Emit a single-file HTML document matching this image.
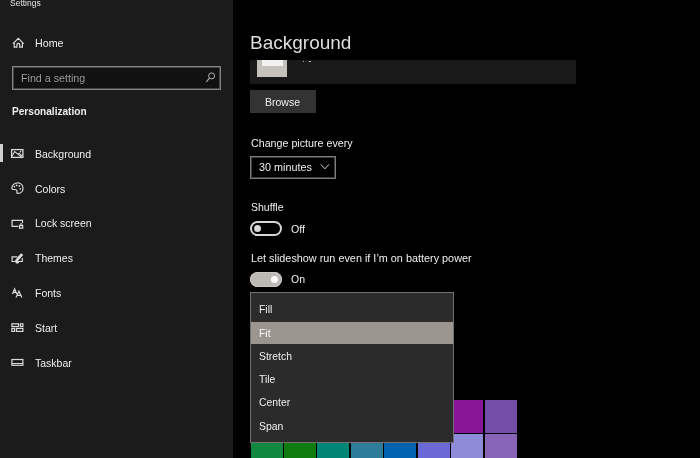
<!DOCTYPE html>
<html><head><meta charset="utf-8">
<style>
*{margin:0;padding:0;box-sizing:border-box}
html,body{width:700px;height:458px;overflow:hidden;background:#000}
body{position:relative;-webkit-font-smoothing:antialiased;font-family:"Liberation Sans",sans-serif;color:#efefef}
.a{position:absolute;white-space:nowrap;line-height:1;will-change:transform}
#side{position:absolute;left:0;top:0;width:233px;height:458px;background:#1b1b1b}
.ic{position:absolute}
</style></head><body>
<div id="side">
  <div class="a" style="left:10.4px;top:-1.5px;font-size:8.5px;color:#e4e4e4">Settings</div>
  <svg class="ic" style="left:8px;top:33px" width="20" height="20" viewBox="0 0 20 20">
    <path d="M5 10.6 L10.3 5.3 L15.6 10.6 M6.2 9.5 V14.2 H8.9 V11.8 A1.4 1.4 0 0 1 11.7 11.8 V14.2 H14.4 V9.5" fill="none" stroke="#dcdcdc" stroke-width="1.2"/>
  </svg>
  <div class="a" style="left:35.3px;top:38.1px;font-size:10.7px">Home</div>
  <div style="position:absolute;left:12px;top:66px;width:209px;height:24px;border:1px solid #838383;box-shadow:inset 0 0 0 1px #454545;background:#111"></div>
  <div class="a" style="left:20.6px;top:72.8px;font-size:10.7px;color:#9a9a9a">Find a setting</div>
  <svg class="ic" style="left:198px;top:64px" width="28" height="28" viewBox="0 0 28 28">
    <circle cx="13.6" cy="11.9" r="3" fill="none" stroke="#b0b0b0" stroke-width="1"/>
    <path d="M11.5 14.2 L8.3 17.8" stroke="#b0b0b0" stroke-width="1.1"/>
  </svg>
  <div class="a" style="left:12px;top:106.8px;font-size:10.1px;font-weight:bold;color:#ececec">Personalization</div>

  <div style="position:absolute;left:0;top:144px;width:3px;height:18px;background:#cfcfcf"></div>
  <!-- Background icon -->
  <svg class="ic" style="left:8px;top:144px" width="20" height="20" viewBox="0 0 20 20">
    <rect x="3.6" y="5.6" width="11.3" height="7.8" fill="none" stroke="#dadada" stroke-width="1.3"/>
    <path d="M4.2 12 L6.6 7.6 L13.6 13 M10 10.2 L11.2 9.2 L14.2 11.8" fill="none" stroke="#dadada" stroke-width="1.1"/>
    <circle cx="12.6" cy="7.6" r="0.8" fill="#dadada"/>
  </svg>
  <div class="a" style="left:35px;top:148.90px;font-size:10.5px">Background</div>
  <!-- Colors icon -->
  <svg class="ic" style="left:8px;top:179px" width="20" height="20" viewBox="0 0 20 20">
    <path d="M9 14.2 C9.5 14.3 9.7 14.4 10.2 14.4 C13 14.4 15 12.2 15 9.2 C15 6.2 12.8 3.9 9.8 3.9 C6.6 3.9 3.9 6.2 3.9 9 C3.9 10.3 4.6 10.6 5.6 10.5 C7.2 10.4 8.5 10.4 8.8 11.5 C9 12.5 8.8 13.2 9 14.2 Z" fill="none" stroke="#dadada" stroke-width="1.2"/>
    <circle cx="6.5" cy="7.6" r="0.85" fill="#dadada"/><circle cx="8.7" cy="6.4" r="0.85" fill="#dadada"/><circle cx="11.4" cy="6.9" r="0.85" fill="#dadada"/><circle cx="12.2" cy="9.8" r="0.85" fill="#dadada"/>
  </svg>
  <div class="a" style="left:35px;top:183.68px;font-size:10.5px">Colors</div>
  <!-- Lock screen icon -->
  <svg class="ic" style="left:8px;top:214px" width="20" height="20" viewBox="0 0 20 20">
    <path d="M10.2 12.4 H4.1 V6.3 H14.5 V9" fill="none" stroke="#dadada" stroke-width="1.2"/>
    <rect x="11.5" y="11.6" width="3.2" height="2.6" fill="none" stroke="#dadada" stroke-width="1.2"/>
    <path d="M12.2 11.2 V9.8 H14 V11.2" fill="none" stroke="#dadada" stroke-width="0.9"/>
  </svg>
  <div class="a" style="left:35px;top:218.46px;font-size:10.5px">Lock screen</div>
  <!-- Themes icon -->
  <svg class="ic" style="left:8px;top:249px" width="20" height="20" viewBox="0 0 20 20">
    <path d="M9.5 7.8 H4.1 V12.5 H14.3 V9" fill="none" stroke="#dadada" stroke-width="1.2"/>
    <path d="M7.4 13 H11 L10.4 14.6 H8 Z" fill="#dadada"/>
    <path d="M6.9 11.5 L13 4.2 L15.3 6.1 L9.2 12.8 Z" fill="#dadada"/>
  </svg>
  <div class="a" style="left:35px;top:253.24px;font-size:10.5px">Themes</div>
  <!-- Fonts icon -->
  <svg class="ic" style="left:8px;top:284px" width="20" height="20" viewBox="0 0 20 20">
    <path d="M4.5 10 L6.6 4.9 L8.7 10 M5.3 8.3 H7.9" fill="none" stroke="#dadada" stroke-width="1.25"/>
    <path d="M8 13.4 L10.9 7.2 L13.9 13.4 M9 11.3 H12.8" fill="none" stroke="#dadada" stroke-width="1.2"/>
  </svg>
  <div class="a" style="left:35px;top:288.02px;font-size:10.5px">Fonts</div>
  <!-- Start icon -->
  <svg class="ic" style="left:8px;top:318px" width="20" height="20" viewBox="0 0 20 20">
    <rect x="3.9" y="5.8" width="6.6" height="2.7" fill="none" stroke="#dadada" stroke-width="1.2"/>
    <rect x="12.4" y="5.8" width="2.5" height="2.7" fill="none" stroke="#dadada" stroke-width="1.2"/>
    <rect x="3.9" y="10.4" width="2.7" height="3" fill="none" stroke="#dadada" stroke-width="1.2"/>
    <rect x="8.5" y="10.4" width="6.4" height="3" fill="none" stroke="#dadada" stroke-width="1.2"/>
  </svg>
  <div class="a" style="left:35px;top:322.80px;font-size:10.5px">Start</div>
  <!-- Taskbar icon -->
  <svg class="ic" style="left:8px;top:353px" width="20" height="20" viewBox="0 0 20 20">
    <rect x="3.9" y="6.5" width="11" height="5.8" fill="none" stroke="#dadada" stroke-width="1.2"/>
    <path d="M3.9 10.5 H14.9" stroke="#dadada" stroke-width="1"/>
  </svg>
  <div class="a" style="left:35px;top:357.58px;font-size:10.5px">Taskbar</div>
</div>

<div id="content">
  <!-- picture bar -->
  <div style="position:absolute;left:250px;top:60px;width:326px;height:24px;background:#1a1a1a"></div>
  <div style="position:absolute;left:257px;top:60px;width:30px;height:17px;background:#c5c2be"></div>
  <div style="position:absolute;left:262px;top:60px;width:20.5px;height:6px;background:#f2f2f2"></div>
  <div style="position:absolute;left:302.5px;top:60.5px;width:1.5px;height:1.5px;background:#bbb"></div>
  <div style="position:absolute;left:309px;top:60.5px;width:1.5px;height:1.5px;background:#bbb"></div>
  <!-- header -->
  <div style="position:absolute;left:233px;top:0;width:467px;height:60px;background:#000"></div>
  <div class="a" style="left:249.8px;top:33.3px;font-size:19px;color:#dedede">Background</div>

  <div style="position:absolute;left:250px;top:90px;width:66px;height:23px;background:#333"></div>
  <div class="a" style="left:265px;top:96.8px;font-size:10.5px">Browse</div>

  <div class="a" style="left:250.6px;top:138px;font-size:10.7px">Change picture every</div>
  <div style="position:absolute;left:250px;top:156px;width:86px;height:23px;border:1px solid #7c7c7c;box-shadow:inset 0 0 0 1px #3c3c3c"></div>
  <div class="a" style="left:259px;top:161.8px;font-size:10.8px">30 minutes</div>
  <svg class="ic" style="left:320px;top:163px" width="11" height="8" viewBox="0 0 11 8">
    <path d="M0.7 1.3 L4.9 5.8 L9.1 1.3" fill="none" stroke="#cfcfcf" stroke-width="1"/>
  </svg>

  <div class="a" style="left:250.9px;top:201.8px;font-size:10.5px">Shuffle</div>
  <div style="position:absolute;left:250px;top:221px;width:32px;height:14.6px;border:2px solid #d6d6d6;border-radius:8px"></div>
  <div style="position:absolute;left:253.8px;top:224.5px;width:7.2px;height:7.2px;border-radius:50%;background:#d6d6d6"></div>
  <div class="a" style="left:291px;top:223.6px;font-size:10.7px">Off</div>

  <div class="a" style="left:250.8px;top:253.3px;font-size:10.85px">Let slideshow run even if I’m on battery power</div>
  <div style="position:absolute;left:250px;top:272px;width:32px;height:14.5px;border-radius:8px;background:#bcb8b4;box-shadow:inset 0 0 0 1px #c8c6c4"></div>
  <div style="position:absolute;left:271.2px;top:275.6px;width:7.2px;height:7.2px;border-radius:50%;background:#fff"></div>
  <div class="a" style="left:291px;top:274.3px;font-size:10.5px">On</div>

  <!-- color tiles -->
  <div style="position:absolute;left:451px;top:400px;width:32.4px;height:33px;background:#881798"></div>
  <div style="position:absolute;left:484.5px;top:400px;width:32.4px;height:33px;background:#744da9"></div>
  <div style="position:absolute;left:250.5px;top:434.3px;width:32px;height:33px;background:#10893e"></div>
  <div style="position:absolute;left:284px;top:434.3px;width:32px;height:33px;background:#107c10"></div>
  <div style="position:absolute;left:317.4px;top:434.3px;width:32px;height:33px;background:#018574"></div>
  <div style="position:absolute;left:350.8px;top:434.3px;width:32px;height:33px;background:#2d7d9a"></div>
  <div style="position:absolute;left:384.2px;top:434.3px;width:32px;height:33px;background:#0063b1"></div>
  <div style="position:absolute;left:417.6px;top:434.3px;width:32px;height:33px;background:#6b69d6"></div>
  <div style="position:absolute;left:451px;top:434.3px;width:32px;height:33px;background:#8e8cd8"></div>
  <div style="position:absolute;left:484.5px;top:434.3px;width:32px;height:33px;background:#8764b8"></div>

  <!-- popup -->
  <div style="position:absolute;left:250px;top:292px;width:204px;height:151px;background:#2b2b2b;border:1px solid #727272"></div>
  <div style="position:absolute;left:251px;top:322px;width:202px;height:22px;background:#9b958f"></div>
  <div class="a" style="left:258.9px;top:305.3px;font-size:10.4px">Fill</div>
  <div class="a" style="left:258.9px;top:328.6px;font-size:10.4px;color:#fafafa">Fit</div>
  <div class="a" style="left:259.3px;top:351.8px;font-size:10.4px">Stretch</div>
  <div class="a" style="left:259.3px;top:375.1px;font-size:10.4px">Tile</div>
  <div class="a" style="left:259px;top:398.4px;font-size:10.4px">Center</div>
  <div class="a" style="left:259px;top:421.7px;font-size:10.4px">Span</div>
</div>
</body></html>
